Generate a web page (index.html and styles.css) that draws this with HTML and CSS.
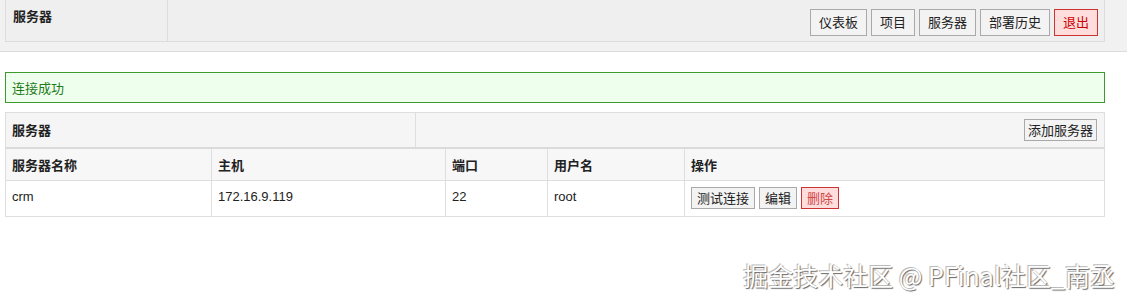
FILE: index.html
```html
<!DOCTYPE html>
<html lang="zh">
<head>
<meta charset="utf-8">
<title>服务器</title>
<link rel="stylesheet" href="styles.css">
</head>
<body>
<div class="topbar">
  <div class="topbox">
    <div class="brand">服务器</div>
    <div class="nav">
      <button class="btn">仪表板</button>
      <button class="btn">项目</button>
      <button class="btn">服务器</button>
      <button class="btn">部署历史</button>
      <button class="btn danger">退出</button>
    </div>
  </div>
</div>
<div class="content">
  <div class="alert">连接成功</div>
  <div class="panel">
    <div class="caption">
      <div class="cap-title">服务器</div>
      <div class="cap-actions"><button class="btn small add">添加服务器</button></div>
    </div>
    <table class="grid">
      <thead>
        <tr class="cols">
          <th class="c1">服务器名称</th>
          <th class="c2">主机</th>
          <th class="c3">端口</th>
          <th class="c4">用户名</th>
          <th class="c5">操作</th>
        </tr>
      </thead>
      <tbody>
        <tr>
          <td>crm</td>
          <td>172.16.9.119</td>
          <td>22</td>
          <td>root</td>
          <td class="ops"><button class="btn small">测试连接</button><button class="btn small">编辑</button><button class="btn small danger soft">删除</button></td>
        </tr>
      </tbody>
    </table>
  </div>
</div>
<div class="watermark">掘金技术社区 @ PFinal社区_南丞</div>
</body>
</html>
```
FILE: styles.css
```css
html, body {
  margin: 0;
  padding: 0;
  background: #fff;
}
body {
  font-family: "Liberation Sans", "Noto Sans CJK SC", sans-serif;
  font-size: 13px;
  color: #222;
  width: 1127px;
  height: 306px;
  overflow: hidden;
  position: relative;
}
.topbar {
  background: #f1f1f1;
  border-bottom: 1px solid #dcdcdc;
  padding: 0 22px 9px 5px;
}
.topbox {
  display: flex;
  height: 42px;
  box-sizing: border-box;
  border: 1px solid #dcdcdc;
  border-top: none;
  background: #efefef;
}
.brand {
  width: 162px;
  border-right: 1px solid #dcdcdc;
  padding: 8px 0 0 7px;
  box-sizing: border-box;
  font-weight: bold;
  font-size: 13px;
  line-height: 17px;
}
.nav {
  flex: 1;
  display: flex;
  justify-content: flex-end;
  align-items: flex-start;
  gap: 4px;
  padding: 9px 6px 0 0;
}
.btn {
  font-family: "Liberation Sans", "Noto Sans CJK SC", sans-serif;
  font-size: 13px;
  line-height: 17px;
  height: 27px;
  padding: 0 8px;
  background: #f3f3f3;
  border: 1px solid #a9a9a9;
  color: #222;
  margin: 0;
  border-radius: 0;
}
.btn.danger {
  background: #fdd;
  border-color: #c33;
  color: #c00;
}
.btn.danger.soft {
  color: #d04848;
}
.btn.small {
  height: 22px;
  padding: 0 5px;
  font-size: 13px;
}
.btn.add {
  padding: 0 3px;
}
.content {
  padding: 20px 22px 0 5px;
}
.alert {
  height: 31px;
  box-sizing: border-box;
  border: 1px solid #3c9a2e;
  background: #efffee;
  color: #1f7a1a;
  padding: 0 6px;
  display: flex;
  align-items: center;
  font-size: 13px;
}
.panel {
  margin-top: 9px;
}
.caption {
  display: flex;
  height: 37px;
  box-sizing: border-box;
  border: 1px solid #dedede;
  border-bottom: 2px solid #dadada;
  background: #f5f5f5;
}
.cap-title {
  width: 410px;
  border-right: 1px solid #dedede;
  font-weight: bold;
  display: flex;
  align-items: center;
  padding-left: 6px;
  box-sizing: border-box;
  padding-bottom: 2px;
}
.cap-actions {
  flex: 1;
  display: flex;
  justify-content: flex-end;
  padding: 6px 7px 0 0;
  align-items: flex-start;
}
.grid {
  width: 100%;
  border-collapse: collapse;
  font-size: 13px;
}
.grid th, .grid td {
  border: 1px solid #dedede;
  text-align: left;
  padding: 0 6px;
}
.grid thead th {
  border-top: none;
}
.grid th {
  font-weight: bold;
  background: #f7f7f7;
  height: 31px;
}
.c1 { width: 193px; }
.c2 { width: 221px; }
.c3 { width: 89px; }
.c4 { width: 124px; }
.grid td {
  height: 36px;
  background: #fff;
  vertical-align: top;
  padding-top: 8px;
  box-sizing: border-box;
}
.grid td.ops {
  padding-top: 6px;
}
.ops .btn {
  margin-right: 4px;
}
.watermark {
  position: absolute;
  right: 12px;
  top: 257px;
  font-family: "Noto Sans CJK SC", "Liberation Sans", sans-serif;
  font-size: 25px;
  color: #fff;
  text-shadow: 1px 1px 1px #666, -1px -1px 0 #bbb;
}
```
